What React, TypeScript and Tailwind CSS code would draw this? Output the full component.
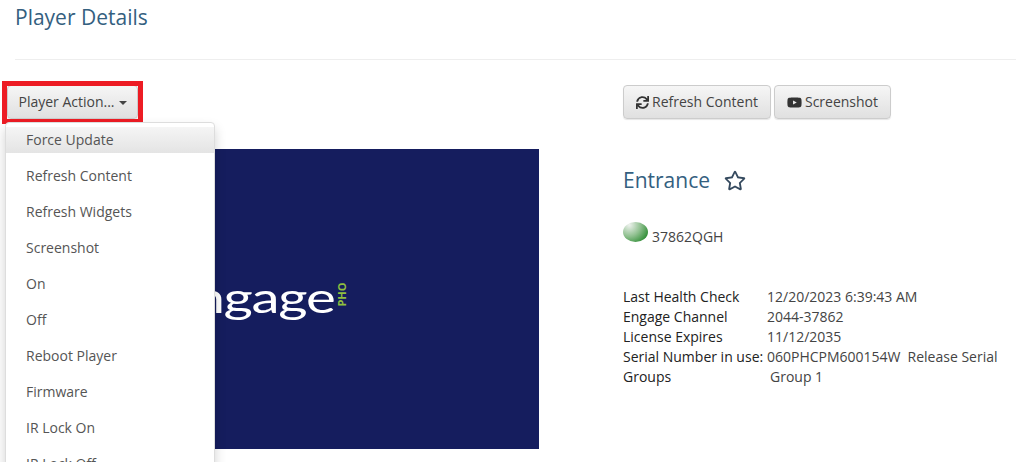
import React from 'react';
import { FaRegStar, FaSync, FaYoutube } from 'react-icons/fa';

const actions = [
  'Force Update',
  'Refresh Content',
  'Refresh Widgets',
  'Screenshot',
  'On',
  'Off',
  'Reboot Player',
  'Firmware',
  'IR Lock On',
  'IR Lock Off',
];

const details = [
  { label: 'Last Health Check', value: '12/20/2023 6:39:43 AM' },
  { label: 'Engage Channel', value: '2044-37862' },
  { label: 'License Expires', value: '11/12/2035' },
];

const btn =
  'flex h-[34px] items-center rounded-[4px] border border-[#ccc] bg-gradient-to-b from-[#f6f6f6] to-[#e0e0e0] text-[14px] text-[#444] shadow-[0_1px_1px_rgba(0,0,0,0.1)]';

const App: React.FC = () => {
  return (
    <div className="h-[462px] w-[1016px] overflow-hidden bg-white font-['Open_Sans',sans-serif] text-[14px] leading-[20px] text-[#444]">
      {/* Header */}
      <div className="ml-[15px] h-[60px] border-b border-[#eee] pt-[3px]">
        <h1 className="text-[21px] leading-[28px] text-[#34607f]">Player Details</h1>
      </div>

      <div className="flex pt-[25px]">
        {/* Left column */}
        <div className="-mt-[1px] w-[623px] pl-[5px]">
          <div className="relative z-10 h-[64px]">
            <button className={`${btn} ml-[2px] mt-[1px] w-[131px] justify-center`}>
              Player Action...
              <span className="ml-[4px] mt-[2px] border-x-[4px] border-t-[4px] border-x-transparent border-t-[#444]" />
            </button>
            {/* Highlight round the button */}
            <div className="absolute -left-[3px] -top-[4px] h-[43px] w-[141px] border-[5px] border-[#ed1c24]" />

            {/* Open menu */}
            <div className="absolute left-0 top-[37px] w-[210px] rounded-[4px] border border-[#ddd] bg-white pt-[4px] shadow-[0_6px_12px_rgba(0,0,0,0.18)]">
              {actions.map((action, i) => (
                <div
                  key={action}
                  className={`mb-[10px] flex h-[26px] items-center pl-[20px] text-[14px] text-[#555] ${
                    i === 0 ? 'bg-gradient-to-b from-[#f5f5f5] to-[#e4e4e4]' : ''
                  }`}
                >
                  {action}
                </div>
              ))}
            </div>
          </div>

          {/* Player preview */}
          <div className="flex h-[300px] w-[534px] items-center bg-[#151d5e]">
            <div className="ml-[160px] mt-[-4px] flex items-center">
              <span className="origin-left scale-x-[1.344] font-['Lato',sans-serif] text-[42px] leading-[44px] font-normal tracking-[-1px] text-white">
                engage
              </span>
              <span className="ml-[38px] -translate-y-[3px] -rotate-90 text-[11px] leading-[11px] font-bold text-[#8fbf3f]">
                PHO
              </span>
            </div>
          </div>
        </div>

        {/* Right column */}
        <div className="flex-1">
          <div className="flex gap-[3px]">
            <button className={`${btn} w-[148px] justify-center gap-[3px]`}>
              <FaSync className="h-[13px] w-[13px] text-[#333]" />
              Refresh Content
            </button>
            <button className={`${btn} w-[117px] justify-center gap-[3px]`}>
              <FaYoutube className="h-[15px] w-[15px] text-[#333]" />
              Screenshot
            </button>
          </div>

          <div className="mt-[46px] flex items-center">
            <h2 className="text-[21px] leading-[30px] text-[#34607f]">Entrance</h2>
            <FaRegStar className="ml-[14px] h-[21px] w-[22px] text-[#34495e]" />
          </div>

          <div className="mt-[27px] flex items-end">
            <span className="mb-[5px] h-[20px] w-[25px] rounded-[50%] bg-[radial-gradient(circle_at_25%_15%,#eef2ee,#8fc08f_45%,#2a8a30_85%)]" />
            <span className="ml-[4px] leading-[20px]">37862QGH</span>
          </div>

          <div className="mt-[40px]">
            {details.map((row) => (
              <div key={row.label} className="flex h-[20px]">
                <span className="w-[144px] font-medium text-[#222]">{row.label}</span>
                <span>{row.value}</span>
              </div>
            ))}
            <div className="flex h-[20px] whitespace-nowrap">
              <span className="w-[144px] font-medium text-[#222]">Serial Number in use:</span>
              <span>060PHCPM600154W</span>
              <span className="ml-[7px]">Release Serial</span>
            </div>
            <div className="flex h-[20px]">
              <span className="w-[147px] font-medium text-[#222]">Groups</span>
              <span>Group 1</span>
            </div>
          </div>
        </div>
      </div>
    </div>
  );
};

export default App;
